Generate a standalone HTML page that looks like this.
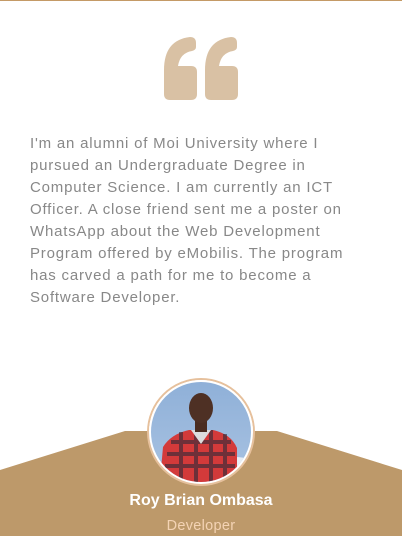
<!DOCTYPE html>
<html><head><meta charset="utf-8"><style>
html,body{margin:0;padding:0;background:#fff;width:402px;height:536px;overflow:hidden;position:relative;font-family:"Liberation Sans",sans-serif}
.top{position:absolute;left:0;top:0;width:402px;height:1px;background:#c49a66}
.txt{position:absolute;left:30px;top:133px;font-size:15px;line-height:22px;color:#888;white-space:nowrap;letter-spacing:0.8px}
.name{position:absolute;left:0;width:402px;text-align:center;top:492px;font-size:16px;font-weight:bold;color:#fff}
.role{position:absolute;left:0;width:402px;text-align:center;top:518px;font-size:14.5px;color:#f4d3b4;letter-spacing:0.3px}
.av{position:absolute;left:149px;top:380px;width:100px;height:100px;border-radius:50%;border:2px solid #fff;box-shadow:0 0 0 2px #e6c09c;overflow:hidden;background:linear-gradient(#8fb0d8,#a9c3e2)}
</style></head><body>
<div class="top"></div>
<svg width="402" height="536" style="position:absolute;left:0;top:0">
<g fill="#d9c1a4">
<path d="M190,37 Q196,37 196,43 L196,47 Q196,50 192,51 Q180,53 178,66 L191,66 Q197,66 197,72 L197,94 Q197,100 191,100 L170,100 Q164,100 164,94 L164,70 Q164,40 190,37 Z"/>
<path transform="translate(41,0)" d="M190,37 Q196,37 196,43 L196,47 Q196,50 192,51 Q180,53 178,66 L191,66 Q197,66 197,72 L197,94 Q197,100 191,100 L170,100 Q164,100 164,94 L164,70 Q164,40 190,37 Z"/>
</g>
<polygon points="0,470 125,431 277,431 402,470 402,536 0,536" fill="#bd996a"/>
</svg>
<div class="txt">I'm an alumni of Moi University where I<br>pursued an Undergraduate Degree in<br>Computer Science. I am currently an ICT<br>Officer. A close friend sent me a poster on<br>WhatsApp about the Web Development<br>Program offered by eMobilis. The program<br>has carved a path for me to become a<br>Software Developer.</div>
<div class="av">
<svg width="100" height="100" viewBox="0 0 100 100">
<ellipse cx="85" cy="85" rx="20" ry="10" fill="#e8eef5"/>
<path d="M8,110 L12,65 Q20,52 38,48 L62,48 Q80,52 86,66 L86,110 Z" fill="#d33a3a"/>
<path d="M20,60 L80,60 M16,72 L84,72 M14,84 L84,84 M30,50 L30,100 M45,48 L45,100 M60,48 L60,100 M74,52 L74,100" stroke="#2a2a3a" stroke-width="4" opacity="0.6"/>
<path d="M40,48 L50,62 L60,48 Z" fill="#ddd"/>
<rect x="44" y="38" width="12" height="12" fill="#4a2c20"/>
<ellipse cx="50" cy="26" rx="12" ry="15" fill="#4e3024"/>
</svg>
</div>
<div class="name">Roy Brian Ombasa</div>
<div class="role">Developer</div>
</body></html>
